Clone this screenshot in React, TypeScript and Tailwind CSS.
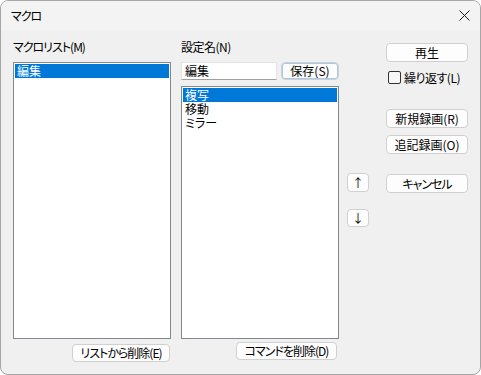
import React from "react";

const font = "font-['Noto_Sans_CJK_JP','Noto_Sans',sans-serif] [font-feature-settings:'palt']";

function Btn({ children, className = "" }: { children: React.ReactNode; className?: string }) {
  return (
    <div
      className={`flex items-center justify-center rounded-[4px] border border-[#d0d0d0] bg-[#fdfdfd] text-[12px] leading-none text-black ${className}`}
    >
      {children}
    </div>
  );
}

function ListBox({ items, className = "" }: { items: string[]; className?: string }) {
  return (
    <div className={`border border-[#828790] bg-white p-px ${className}`}>
      {items.map((item, i) => (
        <div
          key={item}
          className={`h-[14px] pl-[2px] text-[12px] leading-[14px] ${
            i === 0 ? "bg-[#0078d7] text-white" : "text-black"
          }`}
        >
          {item}
        </div>
      ))}
    </div>
  );
}

export default function App() {
  return (
    <div
      className={`flex h-[375px] w-[481px] flex-col overflow-hidden rounded-[8px] border border-[#a6a6a6] bg-[#f0f0f0] ${font}`}
    >
      {/* title bar */}
      <div className="flex h-[29px] items-center justify-between bg-[#f3f3f3] pl-[10px] pr-[9px]">
        <span className="text-[12px] tracking-[-1px] text-black">マクロ</span>
        <svg width="11" height="11" viewBox="0 0 11 11" className="mr-[1px]">
          <path d="M0.5 0.5 L10.5 10.5 M10.5 0.5 L0.5 10.5" stroke="#1a1a1a" strokeWidth="1" />
        </svg>
      </div>

      {/* body */}
      <div className="flex items-start pl-[12px]">
        {/* macro list */}
        <div className="flex w-[158px] flex-col pt-[9px]">
          <div className="h-[16px] text-[12px] leading-[16px] tracking-[-1px] text-black">マクロリスト(M)</div>
          <ListBox items={["編集"]} className="mt-[7px] h-[277px]" />
          <Btn className="ml-auto mr-px mt-[5px] h-[18px] w-[98px] tracking-[-1px]">リストから削除(E)</Btn>
        </div>

        {/* settings */}
        <div className="ml-[10px] flex w-[158px] flex-col pt-[9px]">
          <div className="h-[16px] text-[12px] leading-[16px] tracking-[-0.5px] text-black">設定名(N)</div>
          <div className="mt-[7px] flex h-[18px] items-stretch">
            <div className="flex w-[96px] items-center border border-[#e3e3e3] border-b-[#a0a0a0] bg-white pl-[3px] text-[12px] text-black">
              編集
            </div>
            <Btn className="ml-[4px] w-[58px] border-[#0a5fb4] shadow-[inset_0_0_0_1px_#a9c9ec]">保存(S)</Btn>
          </div>
          <ListBox items={["複写", "移動", "ミラー"]} className="mt-[6px] h-[253px]" />
          <Btn className="ml-[55px] mt-[3px] h-[18px] w-[101px] tracking-[-1px]">コマンドを削除(D)</Btn>
        </div>

        {/* order buttons */}
        <div className="ml-[8px] flex w-[22px] flex-col pt-[143px]">
          <Btn className="h-[19px] text-[11px] text-[#2b4f9b]">↑</Btn>
          <Btn className="mt-[17px] h-[18px] text-[11px] text-[#2b4f9b]">↓</Btn>
        </div>

        {/* actions */}
        <div className="ml-[17px] flex w-[82px] flex-col pt-[13px]">
          <Btn className="h-[19px]">再生</Btn>
          <label className="mt-[9px] flex h-[13px] items-center gap-[3px] pl-[2px] text-[12px] text-black">
            <span className="h-[13px] w-[13px] rounded-[2px] border border-[#333] bg-[#f7f7f7]" />
            <span className="leading-none tracking-[-0.5px]">繰り返す(L)</span>
          </label>
          <Btn className="mt-[25px] h-[19px]">新規録画(R)</Btn>
          <Btn className="mt-[7px] h-[19px]">追記録画(O)</Btn>
          <Btn className="mt-[20px] h-[19px] tracking-[-1px]">キャンセル</Btn>
        </div>
      </div>
    </div>
  );
}
